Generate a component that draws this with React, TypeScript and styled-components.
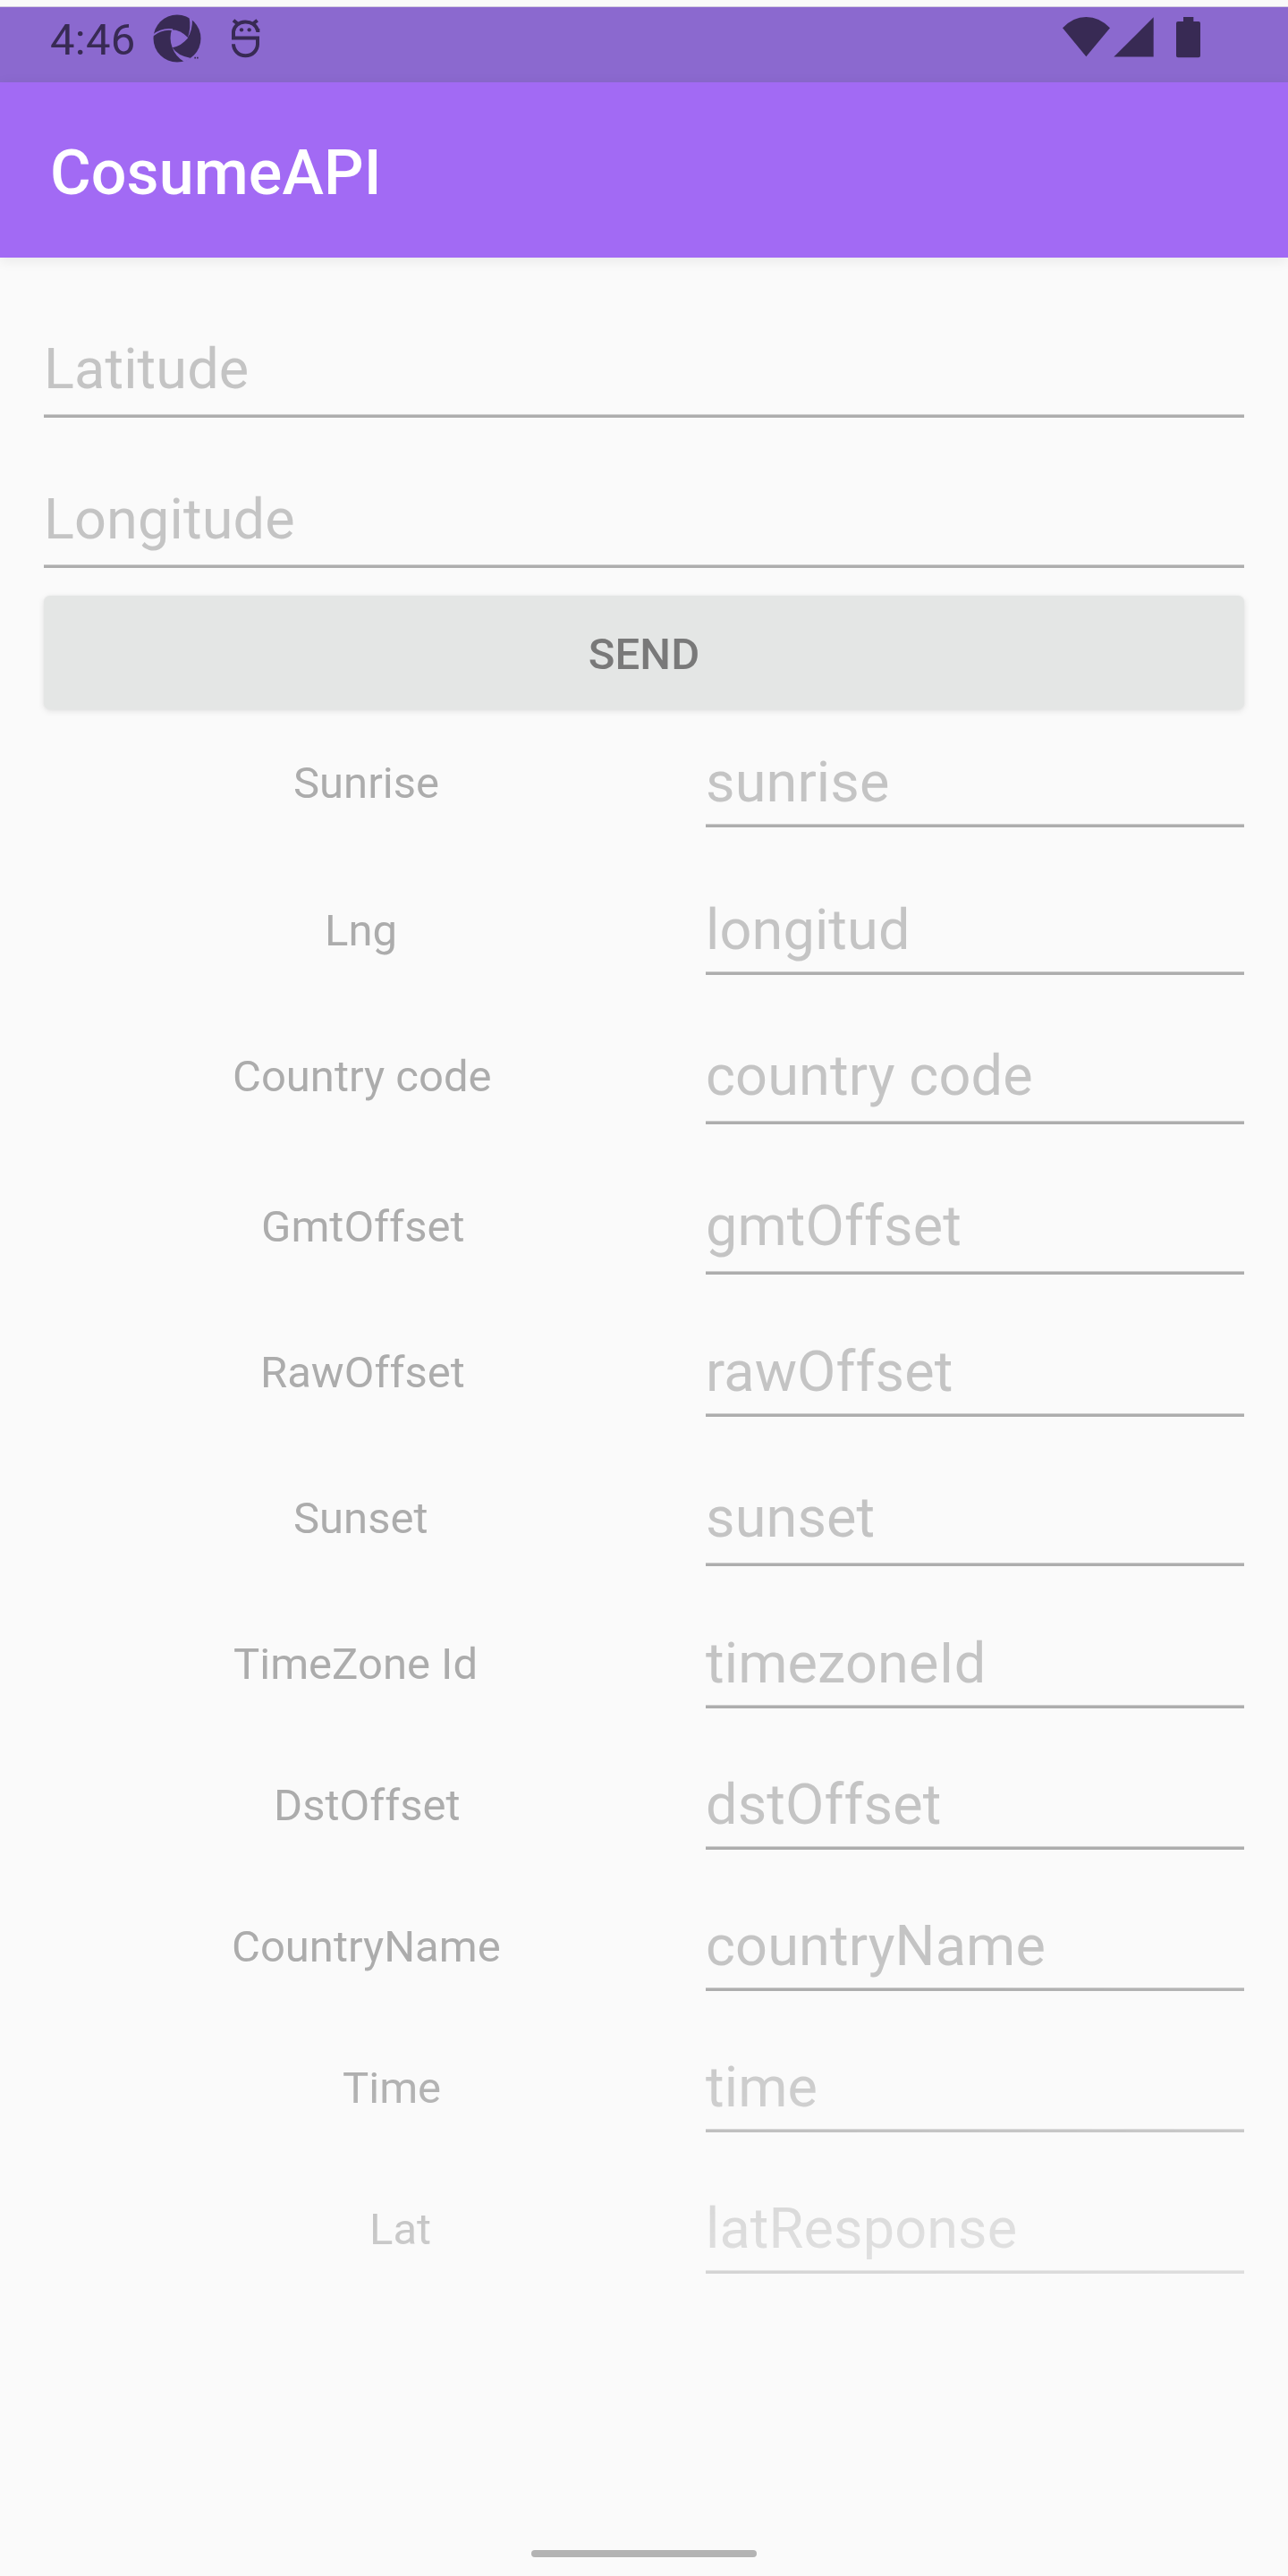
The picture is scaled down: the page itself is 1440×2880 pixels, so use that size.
import React from "react";
import styled, { createGlobalStyle } from "styled-components";

const GlobalStyle = createGlobalStyle`
  *, *::before, *::after { box-sizing: border-box; }
  body { margin: 0; background: #fafafa; font-family: Roboto, "Noto Sans", sans-serif; }
`;

const Screen = styled.main`
  display: flex;
  flex-direction: column;
  width: 1440px;
  height: 2880px;
  padding-top: 7px;
  background: #fafafa;
  overflow: hidden;
`;

const StatusBar = styled.header`
  display: flex;
  justify-content: space-between;
  height: 85px;
  flex: none;
  padding: 8px 98px 0 56px;
  border-top: 1px solid #d3cbe0;
  background: #8b69cf;
  color: #382a54;
`;

const StatusGroup = styled.div`
  display: flex;
  align-items: flex-start;
`;

const Clock = styled.span`
  width: 115px;
  font-size: 49px;
  line-height: 58px;
  letter-spacing: 0.3px;
`;

const Glyph = styled.svg<{ $gap?: number; $top?: number }>`
  display: block;
  flex: none;
  margin-left: ${(p) => p.$gap ?? 0}px;
  margin-top: ${(p) => p.$top ?? 0}px;
`;

const AppBar = styled.div`
  display: flex;
  align-items: center;
  height: 196px;
  flex: none;
  padding: 6px 56px 0;
  background: #a26af4;
  box-shadow: 0 3px 14px rgba(0, 0, 0, 0.08);
`;

const Title = styled.h1`
  margin: 0;
  color: #fff;
  font-size: 70px;
  font-weight: 500;
  line-height: 82px;
  letter-spacing: 0.1px;
`;

const QueryForm = styled.section`
  display: flex;
  flex-direction: column;
  padding: 88px 49px 0;
`;

const Field = styled.div<{ $drop: number; $space: number }>`
  display: flex;
  flex-direction: column;
  gap: ${(p) => p.$drop}px;
  height: ${(p) => p.$space}px;
`;

const Hint = styled.span`
  color: #c4c4c4;
  font-size: 63px;
  line-height: 74px;
  letter-spacing: 0.12px;
  white-space: nowrap;
`;

const Underline = styled.div`
  height: 4px;
  flex: none;
  background: linear-gradient(#cfcfcf 1px, #adadad 1px);
`;

const SendButton = styled.button`
  height: 127px;
  padding: 4px 0 0;
  border: 0;
  border-radius: 7px;
  background: #e4e6e5;
  box-shadow: 0 2px 7px rgba(0, 0, 0, 0.1), 0 0 3px rgba(0, 0, 0, 0.04);
  color: #797979;
  font: 500 49px/58px Roboto, sans-serif;
  letter-spacing: 0.1px;
`;

const Results = styled.section`
  display: flex;
  flex-direction: column;
  flex: 1;
  padding: 45px 49px 0;
  mask-image: linear-gradient(173deg, #000 1540px, transparent 2110px);
`;

const ResultRow = styled.div`
  display: grid;
  grid-template-columns: 740px 602px;
`;

const Label = styled.span<{ $indent: number }>`
  padding-top: 9px;
  padding-left: ${(p) => p.$indent}px;
  color: #acacac;
  font-size: 49px;
  line-height: 58px;
  white-space: nowrap;
`;

const Navigation = styled.footer`
  display: flex;
  justify-content: center;
  height: 29px;
  flex: none;
`;

const HomeHandle = styled.div`
  width: 252px;
  height: 8px;
  border-radius: 4px;
  background: #b3b3b3;
`;

const queries = [
  { hint: "Latitude", drop: 13, space: 168 },
  { hint: "Longitude", drop: 13, space: 122 },
];

const results = [
  { label: "Sunrise", indent: 279, hint: "sunrise", drop: 9, space: 165 },
  { label: "Lng", indent: 314, hint: "longitud", drop: 9, space: 163 },
  { label: "Country code", indent: 211, hint: "country code", drop: 13, space: 168 },
  { label: "GmtOffset", indent: 243, hint: "gmtOffset", drop: 13, space: 163 },
  { label: "RawOffset", indent: 242, hint: "rawOffset", drop: 9, space: 163 },
  { label: "Sunset", indent: 279, hint: "sunset", drop: 13, space: 163 },
  { label: "TimeZone Id", indent: 212, hint: "timezoneId", drop: 9, space: 158 },
  { label: "DstOffset", indent: 257, hint: "dstOffset", drop: 9, space: 158 },
  { label: "CountryName", indent: 210, hint: "countryName", drop: 9, space: 158 },
  { label: "Time", indent: 334, hint: "time", drop: 9, space: 158 },
  { label: "Lat", indent: 364, hint: "latResponse", drop: 9, space: 158 },
];

const ApertureIcon = () => (
  <Glyph width="54" height="54" viewBox="511 46 162 162" fill="none">
    <circle cx="592" cy="127" r="79.5" fill="currentColor" />
    <path d="M574 98Q604 98 629 125Q606 153 576 158Q564 128 574 98Z" fill="#8b69cf" />
    <path d="M511 117Q540 92 577 97.500" stroke="#8b69cf" strokeWidth="5" />
    <path d="M627 125Q640 94 632 52L643 62Q644 100 627 125Z" fill="#8b69cf" />
    <path d="M576 157Q592 184 638 193L617 206Q586 188 576 157Z" fill="#8b69cf" />
    <path d="M650 192h5M658 192h5" stroke="currentColor" strokeWidth="5" />
  </Glyph>
);

const DebugIcon = () => (
  <Glyph width="33" height="46" viewBox="774 57 99 138" fill="none" $gap={33} $top={3}>
    <path
      d="M871 102H864A41 36 0 0 0 783 106V127.500H864V148A40.500 39 0 0 1 783 148"
      stroke="currentColor"
      strokeWidth="12"
    />
    <path d="M783 68l13 11M863 68l-13 11" stroke="currentColor" strokeWidth="12" />
    <circle cx="810" cy="100" r="6.500" fill="currentColor" />
    <circle cx="836" cy="100" r="6.500" fill="currentColor" />
  </Glyph>
);

const WifiIcon = () => (
  <Glyph width="53" height="45" viewBox="144 57 159 135" $top={3}>
    <path d="M144 94Q178 57 223 57T303 94L223 190Z" fill="currentColor" />
  </Glyph>
);

const SignalIcon = () => (
  <Glyph width="45" height="45" viewBox="316 57 135 135" $gap={4} $top={3}>
    <path d="M317 190.500L450 58V190.500Z" fill="currentColor" />
  </Glyph>
);

const BatteryIcon = () => (
  <Glyph width="27" height="46" viewBox="525 57 81 138" $gap={25} $top={3}>
    <path
      d="M549 57h34v15h17a6 6 0 0 1 6 6v109a6 6 0 0 1-6 6h-69a6 6 0 0 1-6-6V78a6 6 0 0 1 6-6h18z"
      fill="currentColor"
    />
  </Glyph>
);

export default function App() {
  return (
    <>
      <GlobalStyle />
      <Screen>
        <StatusBar>
          <StatusGroup>
            <Clock>4:46</Clock>
            <ApertureIcon />
            <DebugIcon />
          </StatusGroup>
          <StatusGroup>
            <WifiIcon />
            <SignalIcon />
            <BatteryIcon />
          </StatusGroup>
        </StatusBar>
        <AppBar>
          <Title>CosumeAPI</Title>
        </AppBar>
        <QueryForm>
          {queries.map((q) => (
            <Field key={q.hint} $drop={q.drop} $space={q.space}>
              <Hint>{q.hint}</Hint>
              <Underline />
            </Field>
          ))}
          <SendButton>SEND</SendButton>
        </QueryForm>
        <Results>
          {results.map((r) => (
            <ResultRow key={r.hint}>
              <Label $indent={r.indent}>{r.label}</Label>
              <Field $drop={r.drop} $space={r.space}>
                <Hint>{r.hint}</Hint>
                <Underline />
              </Field>
            </ResultRow>
          ))}
        </Results>
        <Navigation>
          <HomeHandle />
        </Navigation>
      </Screen>
    </>
  );
}
